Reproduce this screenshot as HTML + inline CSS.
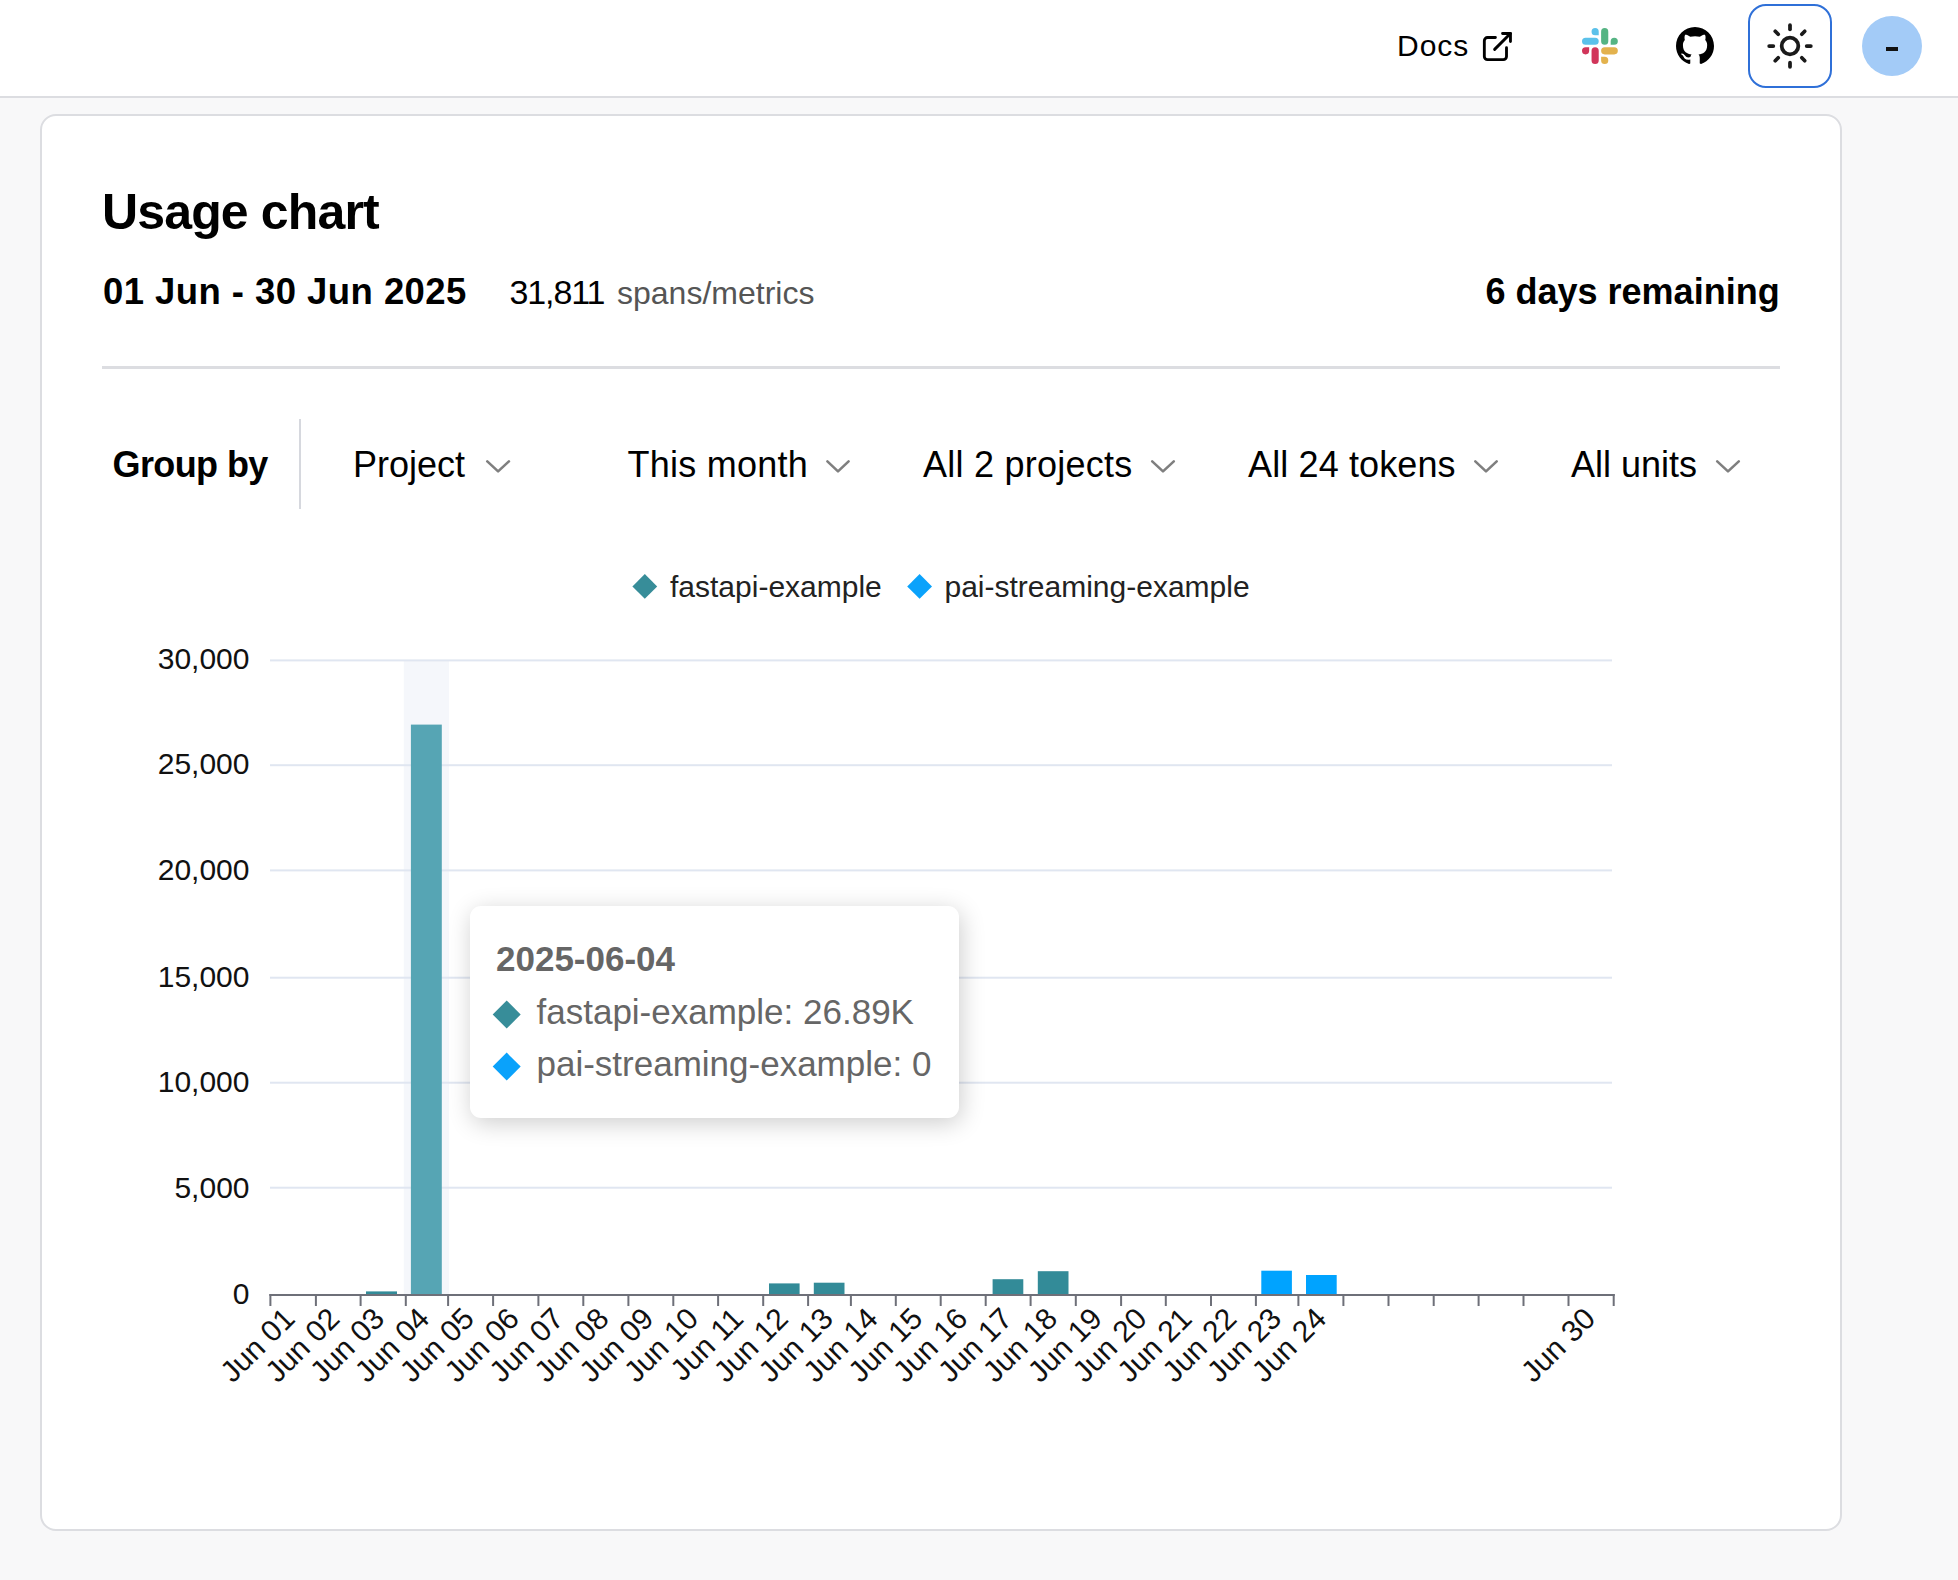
<!DOCTYPE html>
<html>
<head>
<meta charset="utf-8">
<style>
html,body{margin:0;padding:0;}
body{width:1958px;height:1580px;overflow:hidden;background:#f8f8f9;font-family:"Liberation Sans",sans-serif;color:#000;position:relative;}
.abs{position:absolute;white-space:nowrap;line-height:1;}
#hdr{position:absolute;left:0;top:0;width:1958px;height:96px;background:#fff;border-bottom:2px solid #dcdde1;}
#card{position:absolute;left:40px;top:114px;width:1798px;height:1413px;background:#fff;border:2px solid #dcdde1;border-radius:16px;}
.b{font-weight:bold;}
#tip{position:absolute;left:470px;top:906px;width:488.5px;height:212px;background:#fff;border-radius:11px;box-shadow:2px 5px 25px rgba(0,0,0,0.2);}
</style>
</head>
<body>
<div id="hdr"></div>
<!-- header items -->
<div class="abs" id="docs" style="left:1397px;top:31px;font-size:30px;letter-spacing:1px;">Docs</div>
<svg class="abs" style="left:1478px;top:28px;" width="38" height="38" viewBox="0 0 24 24" fill="none" stroke="#000" stroke-width="1.8" stroke-linecap="round" stroke-linejoin="round"><path d="M11 6h-5a2 2 0 0 0 -2 2v10a2 2 0 0 0 2 2h10a2 2 0 0 0 2 -2v-5.5"/><path d="M10.5 13.5l10 -10"/><path d="M15.5 3.5h5v5"/></svg>
<svg class="abs" style="left:1582px;top:28px;" width="36" height="36" viewBox="0 0 54 54"><path fill="#5bc1ea" d="M19.712.133a5.381 5.381 0 0 0-5.376 5.387 5.381 5.381 0 0 0 5.376 5.386h5.376V5.52A5.381 5.381 0 0 0 19.712.133m0 14.365H5.376A5.381 5.381 0 0 0 0 19.884a5.381 5.381 0 0 0 5.376 5.387h14.336a5.381 5.381 0 0 0 5.376-5.387 5.381 5.381 0 0 0-5.376-5.386"/><path fill="#55b483" d="M53.76 19.884a5.381 5.381 0 0 0-5.376-5.386 5.381 5.381 0 0 0-5.376 5.386v5.387h5.376a5.381 5.381 0 0 0 5.376-5.387m-14.336 0V5.52A5.381 5.381 0 0 0 34.048.133a5.381 5.381 0 0 0-5.376 5.387v14.364a5.381 5.381 0 0 0 5.376 5.387 5.381 5.381 0 0 0 5.376-5.387"/><path fill="#e3b24d" d="M34.048 54a5.381 5.381 0 0 0 5.376-5.387 5.381 5.381 0 0 0-5.376-5.386h-5.376v5.386A5.381 5.381 0 0 0 34.048 54m0-14.365h14.336a5.381 5.381 0 0 0 5.376-5.386 5.381 5.381 0 0 0-5.376-5.387H34.048a5.381 5.381 0 0 0-5.376 5.387 5.381 5.381 0 0 0 5.376 5.386"/><path fill="#d1355a" d="M0 34.249a5.381 5.381 0 0 0 5.376 5.386 5.381 5.381 0 0 0 5.376-5.386v-5.387H5.376A5.381 5.381 0 0 0 0 34.25m14.336-.001v14.364A5.381 5.381 0 0 0 19.712 54a5.381 5.381 0 0 0 5.376-5.387V34.25a5.381 5.381 0 0 0-5.376-5.387 5.381 5.381 0 0 0-5.376 5.387"/></svg>
<svg class="abs" style="left:1676px;top:26.5px;" width="38" height="38" viewBox="0 0 16 16"><path fill="#000" d="M8 0C3.58 0 0 3.58 0 8c0 3.54 2.29 6.53 5.47 7.59.4.07.55-.17.55-.38 0-.19-.01-.82-.01-1.49-2.01.37-2.530-.49-2.69-.94-.09-.23-.48-.94-.82-1.13-.28-.15-.68-.52-.01-.53.63-.01 1.08.58 1.23.82.72 1.21 1.870.87 2.330.66.07-.52.28-.87.51-1.07-1.78-.2-3.64-.89-3.64-3.95 0-.87.31-1.59.82-2.15-.08-.2-.36-1.02.08-2.12 0 0 .67-.21 2.2.82.64-.18 1.32-.27 2-.27.68 0 1.36.09 2 .27 1.53-1.04 2.2-.82 2.2-.82.44 1.1.16 1.92.08 2.12.51.56.82 1.27.82 2.15 0 3.07-1.87 3.75-3.65 3.95.29.25.54.73.54 1.48 0 1.07-.01 1.93-.01 2.2 0 .21.15.46.55.38A8.013 8.013 0 0016 8c0-4.42-3.58-8-8-8z"/></svg>
<div class="abs" style="left:1748px;top:4px;width:80px;height:80px;border:2.5px solid #2f70d8;border-radius:18px;"></div>
<svg class="abs" style="left:1765px;top:21px;" width="50" height="50" viewBox="0 0 24 24" fill="none" stroke="#1a1a1a" stroke-width="1.8" stroke-linecap="round"><circle cx="12" cy="12" r="4"/><path d="M12 2v2"/><path d="M12 20v2"/><path d="m4.93 4.93 1.41 1.41"/><path d="m17.66 17.66 1.41 1.41"/><path d="M2 12h2"/><path d="M20 12h2"/><path d="m6.34 17.66-1.41 1.41"/><path d="m19.07 4.93-1.41 1.41"/></svg>
<div class="abs" style="left:1862px;top:16px;width:60px;height:60px;border-radius:50%;background:#a3cbf7;"></div>
<div class="abs" style="left:1886px;top:47px;width:12px;height:4px;background:#111;"></div>

<div id="card"></div>
<div class="abs b" style="left:102px;top:187px;font-size:50px;letter-spacing:-0.85px;">Usage chart</div>
<div class="abs b" style="left:103px;top:273.5px;font-size:36.5px;letter-spacing:0.44px;">01 Jun - 30 Jun 2025</div>
<div class="abs" style="left:509.5px;top:275px;font-size:34px;letter-spacing:-1.1px;">31,811</div>
<div class="abs" style="left:617px;top:277px;font-size:32px;color:#555;">spans/metrics</div>
<div class="abs b" style="left:1485.5px;top:274px;font-size:36px;">6 days remaining</div>
<div class="abs" style="left:102px;top:366px;width:1678px;height:3px;background:#dcdde1;"></div>

<div class="abs b" style="left:112.5px;top:447px;font-size:36px;letter-spacing:-0.6px;">Group by</div>
<div class="abs" style="left:299px;top:419px;width:2px;height:90px;background:#d6d8de;"></div>
<div class="abs" style="left:353px;top:447px;font-size:36px;">Project</div>
<div class="abs" style="left:627.5px;top:447px;font-size:36px;letter-spacing:0.25px;">This month</div>
<div class="abs" style="left:923px;top:447px;font-size:36px;letter-spacing:0.25px;">All 2 projects</div>
<div class="abs" style="left:1248px;top:447px;font-size:36px;letter-spacing:0.12px;">All 24 tokens</div>
<div class="abs" style="left:1571px;top:447px;font-size:36px;">All units</div>
<svg class="abs" style="left:0;top:0;" width="1958" height="1580">
<g fill="none" stroke="#7f7f7f" stroke-width="2.6" stroke-linecap="round" stroke-linejoin="round">
<path d="M487.3 461.4 L498.1 471.4 L508.9 461.4"/>
<path d="M827.4 461.4 L838.0 471.4 L848.6 461.4"/>
<path d="M1152.2 461.4 L1163.0 471.4 L1173.8 461.4"/>
<path d="M1475.3 461.4 L1486.0 471.4 L1496.7 461.4"/>
<path d="M1717.2 461.4 L1728.0 471.4 L1738.8 461.4"/>
</g>
</svg>
<!-- CHART -->
<svg class="abs" style="left:0;top:0;" width="1958" height="1580">
<path d="M644.8 574 L657.2 586.4 L644.8 598.8 L632.4 586.4Z" fill="#378d99"/>
<path d="M919.6 574 L932 586.4 L919.6 598.8 L907.2 586.4Z" fill="#0aa2fb"/>
<g font-family="Liberation Sans, sans-serif" font-size="30" fill="#222">
<text x="670" y="597.2">fastapi-example</text><text x="944.5" y="597.2">pai-streaming-example</text></g>
<rect x="403.8" y="660.4" width="45.2" height="633.6" fill="#f5f7fb"/>
<g fill="#e0e6f1">
<rect x="270" y="659.4" width="1342" height="2"/>
<rect x="270" y="764.2" width="1342" height="2"/>
<rect x="270" y="869.4" width="1342" height="2"/>
<rect x="270" y="976.7" width="1342" height="2"/>
<rect x="270" y="1081.7" width="1342" height="2"/>
<rect x="270" y="1186.7" width="1342" height="2"/>
</g>
<rect x="366.0" y="1291.4" width="31.0" height="2.6" fill="#338b98"/>
<rect x="410.9" y="724.6" width="30.9" height="569.4" fill="#56a5b4"/>
<rect x="769.0" y="1283.4" width="30.6" height="10.6" fill="#338b98"/>
<rect x="813.8" y="1282.7" width="30.7" height="11.3" fill="#338b98"/>
<rect x="992.6" y="1279.2" width="30.7" height="14.8" fill="#338b98"/>
<rect x="1037.8" y="1271.2" width="30.7" height="22.8" fill="#338b98"/>
<rect x="1261.3" y="1270.7" width="30.6" height="23.3" fill="#00a3ff"/>
<rect x="1306.0" y="1275.0" width="30.7" height="19.0" fill="#00a3ff"/>
<g fill="#6e7079">
<rect x="269.4" y="1294" width="1345.3" height="2"/>
<rect x="269.4" y="1294" width="2" height="12"/>
<rect x="314.9" y="1294" width="2" height="12"/>
<rect x="359.6" y="1294" width="2" height="12"/>
<rect x="404.8" y="1294" width="2" height="12"/>
<rect x="447.1" y="1294" width="2" height="12"/>
<rect x="492.1" y="1294" width="2" height="12"/>
<rect x="537.4" y="1294" width="2" height="12"/>
<rect x="582.3" y="1294" width="2" height="12"/>
<rect x="627.4" y="1294" width="2" height="12"/>
<rect x="672.3" y="1294" width="2" height="12"/>
<rect x="717.1" y="1294" width="2" height="12"/>
<rect x="762.2" y="1294" width="2" height="12"/>
<rect x="807.1" y="1294" width="2" height="12"/>
<rect x="849.9" y="1294" width="2" height="12"/>
<rect x="894.8" y="1294" width="2" height="12"/>
<rect x="939.7" y="1294" width="2" height="12"/>
<rect x="984.7" y="1294" width="2" height="12"/>
<rect x="1029.6" y="1294" width="2" height="12"/>
<rect x="1074.8" y="1294" width="2" height="12"/>
<rect x="1120.1" y="1294" width="2" height="12"/>
<rect x="1164.8" y="1294" width="2" height="12"/>
<rect x="1210.0" y="1294" width="2" height="12"/>
<rect x="1254.9" y="1294" width="2" height="12"/>
<rect x="1297.4" y="1294" width="2" height="12"/>
<rect x="1342.4" y="1294" width="2" height="12"/>
<rect x="1387.5" y="1294" width="2" height="12"/>
<rect x="1432.7" y="1294" width="2" height="12"/>
<rect x="1477.6" y="1294" width="2" height="12"/>
<rect x="1522.5" y="1294" width="2" height="12"/>
<rect x="1567.5" y="1294" width="2" height="12"/>
<rect x="1612.7" y="1294" width="2" height="12"/>
</g>
<g font-family="Liberation Sans, sans-serif" font-size="30" fill="#111" text-anchor="end">
<text x="249.5" y="669.0">30,000</text>
<text x="249.5" y="774.1">25,000</text>
<text x="249.5" y="880.2">20,000</text>
<text x="249.5" y="986.8">15,000</text>
<text x="249.5" y="1091.5">10,000</text>
<text x="249.5" y="1197.9">5,000</text>
<text x="249.5" y="1304.2">0</text>
</g>
<g font-family="Liberation Sans, sans-serif" font-size="30" fill="#111" text-anchor="end">
<text transform="translate(289.1 1313) rotate(-45)" dy="10.4">Jun 01</text>
<text transform="translate(334.0 1313) rotate(-45)" dy="10.4">Jun 02</text>
<text transform="translate(378.8 1313) rotate(-45)" dy="10.4">Jun 03</text>
<text transform="translate(423.7 1313) rotate(-45)" dy="10.4">Jun 04</text>
<text transform="translate(468.5 1313) rotate(-45)" dy="10.4">Jun 05</text>
<text transform="translate(513.4 1313) rotate(-45)" dy="10.4">Jun 06</text>
<text transform="translate(558.2 1313) rotate(-45)" dy="10.4">Jun 07</text>
<text transform="translate(603.1 1313) rotate(-45)" dy="10.4">Jun 08</text>
<text transform="translate(648.0 1313) rotate(-45)" dy="10.4">Jun 09</text>
<text transform="translate(692.8 1313) rotate(-45)" dy="10.4">Jun 10</text>
<text transform="translate(737.6 1313) rotate(-45)" dy="10.4">Jun 11</text>
<text transform="translate(782.5 1313) rotate(-45)" dy="10.4">Jun 12</text>
<text transform="translate(827.4 1313) rotate(-45)" dy="10.4">Jun 13</text>
<text transform="translate(872.2 1313) rotate(-45)" dy="10.4">Jun 14</text>
<text transform="translate(917.0 1313) rotate(-45)" dy="10.4">Jun 15</text>
<text transform="translate(961.9 1313) rotate(-45)" dy="10.4">Jun 16</text>
<text transform="translate(1006.8 1313) rotate(-45)" dy="10.4">Jun 17</text>
<text transform="translate(1051.6 1313) rotate(-45)" dy="10.4">Jun 18</text>
<text transform="translate(1096.5 1313) rotate(-45)" dy="10.4">Jun 19</text>
<text transform="translate(1141.3 1313) rotate(-45)" dy="10.4">Jun 20</text>
<text transform="translate(1186.2 1313) rotate(-45)" dy="10.4">Jun 21</text>
<text transform="translate(1231.0 1313) rotate(-45)" dy="10.4">Jun 22</text>
<text transform="translate(1275.8 1313) rotate(-45)" dy="10.4">Jun 23</text>
<text transform="translate(1320.7 1313) rotate(-45)" dy="10.4">Jun 24</text>
<text transform="translate(1589.8 1313) rotate(-45)" dy="10.4">Jun 30</text>
</g>
</svg>
<div id="tip"></div>
<svg class="abs" style="left:0;top:0;" width="1958" height="1580">
<g font-family="Liberation Sans, sans-serif" fill="#666">
<text x="496" y="971.2" font-size="35" font-weight="bold">2025-06-04</text>
<path d="M506.7 1000.5 L520.7 1014.5 L506.7 1028.5 L492.7 1014.5Z" fill="#378d99"/>
<path d="M506.7 1052.6 L520.7 1066.6 L506.7 1080.6 L492.7 1066.6Z" fill="#0aa2fb"/>
<text x="536.5" y="1024" font-size="35">fastapi-example: 26.89K</text>
<text x="536.5" y="1076.2" font-size="35">pai-streaming-example: 0</text>
</g></svg>
</body>
</html>
